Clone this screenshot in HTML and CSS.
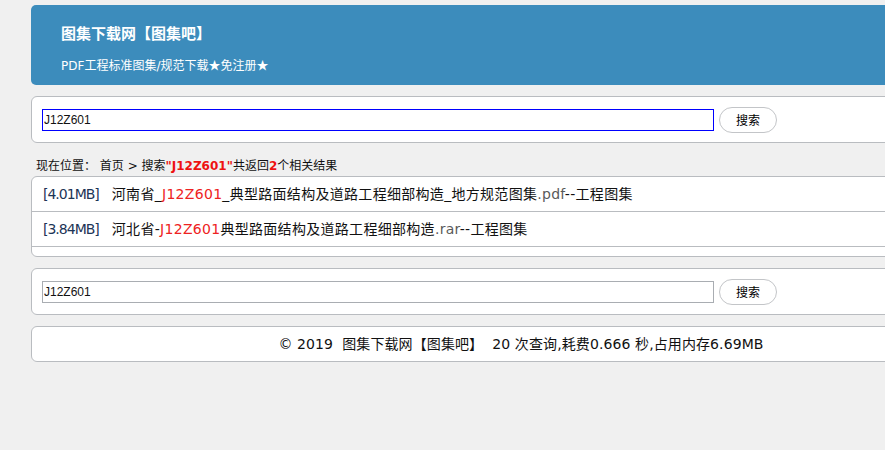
FILE: index.html
```html
<!DOCTYPE html>
<html lang="zh-CN">
<head>
<meta charset="utf-8">
<title>图集下载网【图集吧】</title>
<link rel="stylesheet" href="styles.css">
</head>
<body>
<div class="wrap">
  <header class="head">
    <h1 class="title">图集下载网【图集吧】</h1>
    <p class="sub">PDF工程标准图集/规范下载<span class="star">★</span>免注册<span class="star">★</span></p>
  </header>

  <form class="panel search">
    <input class="kw focus" type="text" value="J12Z601">
    <button class="btn" type="button">搜索</button>
  </form>

  <div class="crumb">现在位置： 首页 &gt; 搜索<b class="red">"J12Z601"</b>共返回<b class="red">2</b>个相关结果</div>

  <ul class="panel results">
    <li class="row"><span class="size">[4.01MB]</span>河南省_<span class="hl">J12Z601</span>_典型路面结构及道路工程细部构造_地方规范图集<span class="ext">.pdf</span>--工程图集</li>
    <li class="row"><span class="size">[3.84MB]</span>河北省-<span class="hl">J12Z601</span>典型路面结构及道路工程细部构造<span class="ext">.rar</span>--工程图集</li>
  </ul>

  <form class="panel search">
    <input class="kw" type="text" value="J12Z601">
    <button class="btn" type="button">搜索</button>
  </form>

  <footer class="panel foot">© 2019 &nbsp;图集下载网【图集吧】 &nbsp;20 次查询,耗费0.666 秒,占用内存6.69MB</footer>
</div>
</body>
</html>
```

FILE: styles.css
```css
html, body {
  overflow: hidden;
}
body {
  margin: 0;
  background: #f0f0f0;
  font-family: "DejaVu Sans", "Noto Sans CJK SC", sans-serif;
  color: #111;
  width: 885px;
}
.wrap {
  margin: 5px 0 0 31px;
  width: 980px;
  display: flex;
  flex-direction: column;
}
.head {
  background: #3c8cbc;
  border-radius: 5px;
  height: 80px;
  box-sizing: border-box;
  padding: 17px 30px 0;
  color: #fff;
}
.title {
  margin: 0;
  font-family: "Noto Sans CJK SC", sans-serif;
  font-size: 15px;
  font-weight: bold;
  line-height: 22px;
}
.sub {
  margin: 13px 0 0;
  font-family: "DejaVu Sans", "Noto Sans CJK SC", sans-serif;
  font-size: 12px;
  line-height: 16px;
}
.star {
  font-family: "Noto Sans CJK SC", sans-serif;
}
.panel {
  background: #fff;
  border: 1px solid #b9bcc0;
  border-radius: 6px;
  margin: 0;
}
.search {
  margin-top: 11px;
  height: 47px;
  box-sizing: border-box;
  padding: 0 10px;
  display: flex;
  align-items: center;
  gap: 5px;
}
.kw {
  width: 672px;
  height: 22px;
  box-sizing: border-box;
  border: 1px solid #a9adb2;
  padding: 0 0 0 1px;
  font-family: "Liberation Sans", Arial, sans-serif;
  font-size: 12px;
  color: #111;
  outline: none;
  margin: 0;
}
.kw.focus {
  border-color: #0000ff;
}
.btn {
  width: 58px;
  height: 26px;
  border: 1px solid #c3c5c8;
  border-radius: 13px;
  background: #fff;
  font-family: "Noto Sans CJK SC", sans-serif;
  font-size: 12px;
  color: #000;
  padding: 0;
  margin: 0;
}
.crumb {
  font-size: 12px;
  line-height: 16px;
  margin: 15px 0 2px 5px;
  color: #111;
}
.red {
  color: #ee1111;
  font-weight: bold;
}
.results {
  list-style: none;
  padding: 0 0 9px;
}
.row {
  height: 35px;
  box-sizing: border-box;
  border-bottom: 1px solid #b9bcc0;
  padding: 0 11px;
  font-size: 14px;
  line-height: 34px;
  color: #111;
  white-space: nowrap;
  letter-spacing: 0.3px;
}
.size {
  color: #1d3557;
  letter-spacing: -1px;
  margin-right: 13px;
}
.hl {
  color: #ee2222;
}
.ext {
  color: #5a5a5a;
}
.foot {
  margin-top: 11px;
  height: 36px;
  box-sizing: border-box;
  font-size: 14px;
  line-height: 34px;
  text-align: center;
  color: #111;
  letter-spacing: 0.1px;
}
```
